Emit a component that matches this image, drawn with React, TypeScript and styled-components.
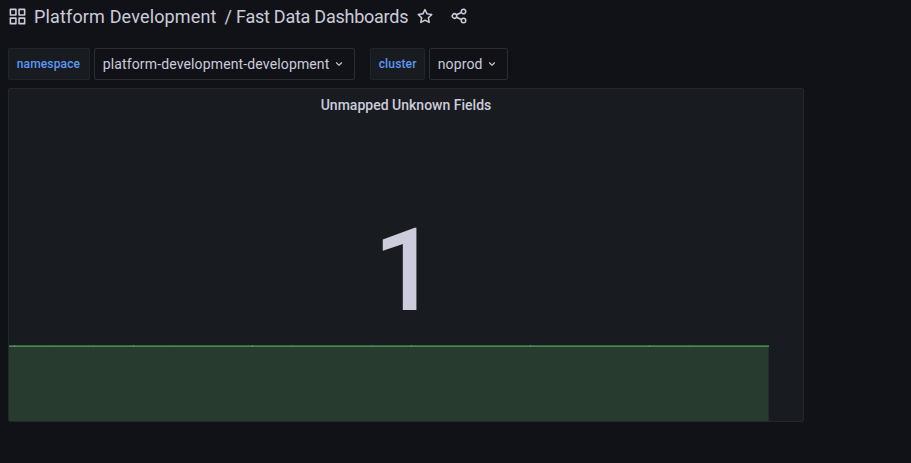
import React from "react";
import styled, { createGlobalStyle } from "styled-components";

const GlobalStyle = createGlobalStyle`
  * { box-sizing: border-box; }
  body {
    margin: 0;
    background: #111217;
    color: #ccccdc;
    font-family: Roboto, "Liberation Sans", sans-serif;
    font-size: 14px;
    line-height: 1.5;
  }
`;

const Page = styled.div`
  height: 463px;
  padding: 0 8px;
  overflow: hidden;
`;

const Toolbar = styled.header`
  display: flex;
  align-items: center;
  height: 32px;
`;

const AppsIcon = styled.span`
  display: flex;
  margin: 0 0.6px 0 -0.2px;
`;

const Title = styled.h1`
  display: flex;
  margin: 0 0 0 6.6px;
  padding-top: 2px;
  font-size: 18px;
  font-weight: 400;
  line-height: 32px;
  white-space: pre;
`;

const Crumb = styled.span<{ $width: number; $spacing: number }>`
  width: ${(p) => p.$width}px;
  letter-spacing: ${(p) => p.$spacing}px;
`;

const IconButton = styled.button<{ $gap: number }>`
  display: flex;
  padding: 0;
  margin-left: ${(p) => p.$gap}px;
  border: 0;
  background: none;
  color: inherit;
`;

const Glyph = styled.svg<{ $size: number }>`
  display: block;
  flex: none;
  width: ${(p) => p.$size}px;
  height: ${(p) => p.$size}px;
  fill: currentColor;
`;

const Variables = styled.div`
  display: flex;
  gap: 15px;
  margin-top: 16px;
`;

const Variable = styled.div`
  display: flex;
  gap: 4px;
`;

const Label = styled.label<{ $width: number }>`
  display: flex;
  align-items: center;
  width: ${(p) => p.$width}px;
  height: 32px;
  padding-left: 7.7px;
  border: 1px solid #22252b;
  border-radius: 2px;
  background: #181b1f;
  color: #5f98f8;
  font-size: 12px;
  font-weight: 500;
  letter-spacing: 0.15px;
`;

const Select = styled.button<{ $width: number }>`
  display: flex;
  align-items: center;
  justify-content: space-between;
  width: ${(p) => p.$width}px;
  height: 32px;
  padding: 0 8px 0 7.7px;
  border: 1px solid #2d2e34;
  border-radius: 2px;
  background: #111217;
  color: inherit;
  font: inherit;
  letter-spacing: 0.14px;
  white-space: nowrap;
`;

const Panel = styled.section`
  display: flex;
  flex-direction: column;
  width: 796px;
  height: 334px;
  margin-top: 8px;
  border: 1px solid #25272c;
  border-radius: 2px;
  background: #181b1f;
`;

const PanelTitle = styled.h2`
  margin: 0;
  height: 32px;
  font-size: 14px;
  font-weight: 500;
  line-height: 32px;
  letter-spacing: 0.01px;
  text-align: center;
`;

const Value = styled.div`
  flex: 1;
  padding-top: 81px;
  font-size: 115px;
  font-weight: 500;
  line-height: 138px;
  text-align: center;
`;

const Sparkline = styled.svg`
  display: block;
  width: 760px;
  height: 76px;
`;

const paths = {
  apps: "M10,13H3a1,1,0,0,0-1,1v7a1,1,0,0,0,1,1h7a1,1,0,0,0,1-1V14A1,1,0,0,0,10,13ZM9,20H4V15H9ZM21,2H14a1,1,0,0,0-1,1v7a1,1,0,0,0,1,1h7a1,1,0,0,0,1-1V3A1,1,0,0,0,21,2ZM20,9H15V4h5Zm1,4H14a1,1,0,0,0-1,1v7a1,1,0,0,0,1,1h7a1,1,0,0,0,1-1V14A1,1,0,0,0,21,13Zm-1,7H15V15h5ZM10,2H3A1,1,0,0,0,2,3v7a1,1,0,0,0,1,1h7a1,1,0,0,0,1-1V3A1,1,0,0,0,10,2ZM9,9H4V4H9Z",
  star: "M22,9.67A1,1,0,0,0,21.14,9l-5.69-.83L12.9,3a1,1,0,0,0-1.8,0L8.55,8.16,2.86,9a1,1,0,0,0-.81.68,1,1,0,0,0,.25,1l4.13,4-1,5.68A1,1,0,0,0,6.9,21.44L12,18.77l5.1,2.67a.93.93,0,0,0,.46.12,1,1,0,0,0,.59-.19,1,1,0,0,0,.4-1l-1-5.68,4.13-4A1,1,0,0,0,22,9.67Zm-6.15,4a1,1,0,0,0-.29.88l.72,4.2-3.76-2a1.06,1.06,0,0,0-.94,0l-3.76,2,.72-4.2a1,1,0,0,0-.29-.88l-3-3,4.21-.61a1,1,0,0,0,.76-.55L12,5.7l1.88,3.82a1,1,0,0,0,.76.55l4.21.61Z",
  share: "M18,14a4,4,0,0,0-3.08,1.48l-5.1-2.35a3.64,3.64,0,0,0,0-2.26l5.1-2.35A4,4,0,1,0,14,6a4.17,4.17,0,0,0,.07.71L8.79,9.14a4,4,0,1,0,0,5.72l5.28,2.43A4.17,4.17,0,0,0,14,18a4,4,0,1,0,4-4ZM18,4a2,2,0,1,1-2,2A2,2,0,0,1,18,4ZM6,14a2,2,0,1,1,2-2A2,2,0,0,1,6,14Zm12,6a2,2,0,1,1,2-2A2,2,0,0,1,18,20Z",
  down: "M17,9.17a1,1,0,0,0-1.41,0L12,12.71,8.46,9.17a1,1,0,0,0-1.41,0,1,1,0,0,0,0,1.42l4.24,4.24a1,1,0,0,0,1.42,0L17,10.59A1,1,0,0,0,17,9.17Z",
};

function Icon({ name, size }: { name: keyof typeof paths; size: number }) {
  return (
    <Glyph $size={size} viewBox="0 0 24 24" aria-hidden="true">
      <path d={paths[name]} />
    </Glyph>
  );
}

const variables = [
  { name: "namespace", value: "platform-development-development", labelWidth: 82, width: 261 },
  { name: "cluster", value: "noprod", labelWidth: 55, width: 79 },
];

// Sample boundaries along the series line: x offset and visibility.
const samples = [
  [5, 0.6], [45, 0.15], [84, 0.25], [124, 0.6], [164, 0.2], [203, 0.1], [243, 0.6],
  [283, 0.25], [362, 0.3], [402, 0.5], [521, 0.6], [640, 0.5], [680, 0.2],
];

export default function App() {
  return (
    <>
      <GlobalStyle />
      <Page>
        <Toolbar>
          <AppsIcon>
            <Icon name="apps" size={19} />
          </AppsIcon>
          <Title>
            <Crumb $width={190.5} $spacing={0.15}>Platform Development</Crumb>
            <Crumb $width={11.5} $spacing={0}>/</Crumb>
            <Crumb $width={172} $spacing={-0.25}>Fast Data Dashboards</Crumb>
          </Title>
          <IconButton $gap={8} aria-label="Mark as favorite">
            <Icon name="star" size={18} />
          </IconButton>
          <IconButton $gap={16} aria-label="Share dashboard">
            <Icon name="share" size={18} />
          </IconButton>
        </Toolbar>
        <Variables>
          {variables.map((v) => (
            <Variable key={v.name}>
              <Label $width={v.labelWidth}>{v.name}</Label>
              <Select $width={v.width}>
                {v.value}
                <Icon name="down" size={14} />
              </Select>
            </Variable>
          ))}
        </Variables>
        <Panel>
          <PanelTitle>Unmapped Unknown Fields</PanelTitle>
          <Value>1</Value>
          <Sparkline viewBox="0 0 760 76" shapeRendering="crispEdges">
            <rect y="1" width="759" height="75" fill="#273b2f" />
            <rect x="759" y="1" width="1" height="75" fill="#223029" />
            <rect width="760" height="1" fill="#39683f" />
            <rect y="1" width="760" height="1" fill="#478751" />
            {samples.map(([x, opacity]) => (
              <rect key={x} x={x} width="1" height="2" fill="#73a47a" opacity={opacity} />
            ))}
          </Sparkline>
        </Panel>
      </Page>
    </>
  );
}
